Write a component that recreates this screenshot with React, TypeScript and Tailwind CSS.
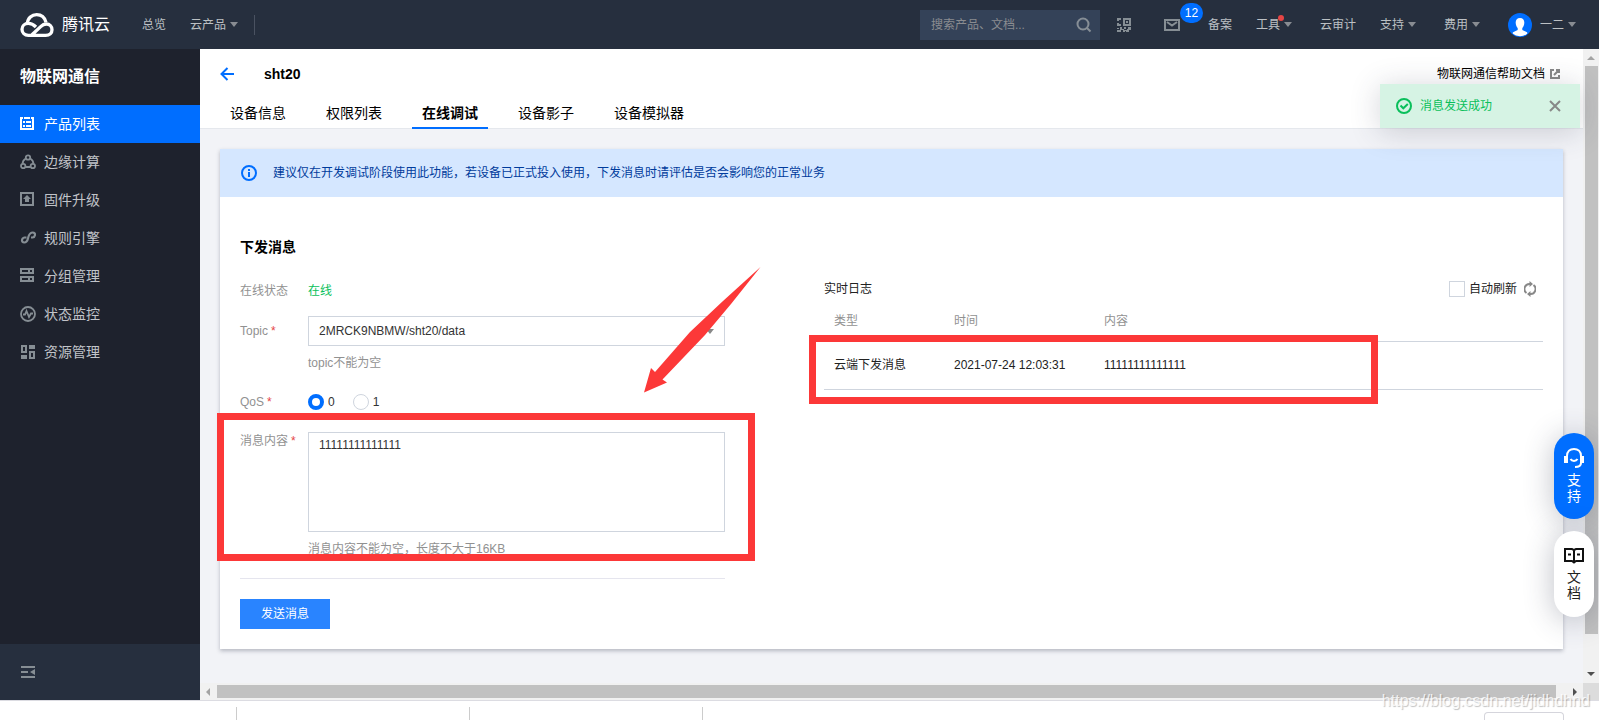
import React from "react";

const navItems = ["产品列表", "边缘计算", "固件升级", "规则引擎", "分组管理", "状态监控", "资源管理"];
const tabs = ["设备信息", "权限列表", "在线调试", "设备影子", "设备模拟器"];

function Caret({ className = "text-[#888c92]" }: { className?: string }) {
  return (
    <svg width="8" height="5" viewBox="0 0 8 5" className={className} aria-hidden="true">
      <path d="M0 0h8L4 5z" fill="currentColor" />
    </svg>
  );
}

function CloudLogo() {
  return (
    <svg width="34" height="24" viewBox="0 0 100 72" fill="none" stroke="#fff" strokeWidth="10" aria-hidden="true">
      <path d="M47 42C39 34 31 31 24 31C13 31 5 39 5 49C5 59 13 67 24 67H76C88 67 95 60 95 50C95 40 88 33 78 33C71 33 66 36 61 41L35 65" />
      <path d="M21 32C22 15 35 5 49 5C62 5 73 13 77 28" />
    </svg>
  );
}

function NavIcon({ index }: { index: number }) {
  const common = { width: 16, height: 16, viewBox: "0 0 16 16", fill: "none", stroke: "currentColor", strokeWidth: 2, "aria-hidden": true } as const;
  switch (index) {
    case 0:
      return (
        <svg {...common}>
          <path d="M1 2v11h12V2M0 2h3M11 2h3M4 2h6" />
          <path d="M0 1h3v2H0zM11 1h3v2h-3z" fill="currentColor" stroke="none" />
          <path d="M3 6h2M6 6h5M3 10h2M6 10h5" />
        </svg>
      );
    case 1:
      return (
        <svg {...common} strokeWidth="1.800">
          <circle cx="8" cy="3.500" r="2.200" />
          <circle cx="3.200" cy="12" r="2.200" />
          <circle cx="12.800" cy="12" r="2.200" />
          <path d="M5.800 4.500C4 5.500 2.600 7.500 2.600 9.800M10.200 4.500C12 5.500 13.400 7.500 13.400 9.800M5.400 13H10.600" />
        </svg>
      );
    case 2:
      return (
        <svg {...common}>
          <path d="M1 1h12v12H1z" />
          <path d="M7 3l4 4H9v3H5V7H3z" fill="currentColor" stroke="none" />
        </svg>
      );
    case 3:
      return (
        <svg {...common} strokeWidth="2.200">
          <path d="M6.500 7.500H4.500C1.500 8 1 12.500 4.200 12.500C8 12.500 7.500 9.500 8.500 6.500C9.500 3.500 10.500 2.500 12.800 2.500C16 2.500 15.500 7 12.500 7.500H11" />
        </svg>
      );
    case 4:
      return (
        <svg {...common}>
          <path d="M1 1h12v4H1zM1 9h12v4H1zM9 1v4M9 9v4" />
        </svg>
      );
    case 5:
      return (
        <svg {...common}>
          <circle cx="8" cy="8" r="7" strokeWidth="1.800" />
          <path d="M3 8.500h2L6.500 5L9 11l2-3.500h2" strokeWidth="1.800" />
        </svg>
      );
    default:
      return (
        <svg {...common}>
          <path d="M2 2h4v6H2zM10 8h4v6h-4z" />
          <path d="M9 1h6v4H9zM1 11h6v4H1z" fill="currentColor" stroke="none" />
        </svg>
      );
  }
}

function TopBar() {
  return (
    <header className="flex h-[49px] shrink-0 items-center bg-[#262f3e] pr-[23px] pl-5 text-xs text-[#bcc0c4]">
      <a href="#home" className="flex items-center gap-2 text-base text-white">
        <CloudLogo />
        腾讯云
      </a>
      <a href="#overview" className="ml-8">总览</a>
      <button type="button" className="ml-6 flex items-center gap-1">云产品 <Caret /></button>
      <span className="ml-4 h-5 w-px bg-[#4a5261]" />
      <div className="ml-auto flex items-center">
        <label className="flex h-[30px] w-[180px] items-center bg-[#344258] pr-2 pl-[11px]">
          <span className="sr-only">搜索</span>
          <input placeholder="搜索产品、文档..." className="h-[30px] min-w-0 flex-1 bg-transparent outline-none placeholder:text-[#8a8c90]" />
          <svg width="16" height="16" viewBox="0 0 16 16" fill="none" stroke="#868e96" strokeWidth="2" aria-hidden="true">
            <circle cx="7" cy="7" r="5.500" />
            <path d="M11 11l3.500 3.500" />
          </svg>
        </label>
        <button type="button" aria-label="二维码" className="ml-[17px] text-[#868e94]">
          <svg width="14" height="14" viewBox="0 0 14 14" fill="currentColor" aria-hidden="true">
            <path d="M0 0h4v2H2v1H0zM0 5h2v1h2v2H0zM6 0h8v8H6zM8 2v4h4V2zM9 3h2v2H9zM0 10h2v1H0zM3 9h2v2h2V9h2v2H7v1H4v2H0v-2h3zM11 9h3v3h-2v-1h-1zM6 12h4v-1h2v3H9v-1H8v1H6z" fillRule="evenodd" />
          </svg>
        </button>
        <button type="button" aria-label="站内信" className="relative ml-[33px] text-[#868e94]">
          <svg width="16" height="12" viewBox="0 0 16 12" fill="none" stroke="currentColor" strokeWidth="2" aria-hidden="true">
            <path d="M1 1h14v10H1zM3 3l5 3.500L13 3" />
          </svg>
          <span className="absolute -top-4 left-4 flex h-5 w-[23px] items-center justify-center rounded-full bg-[#006eff] text-xs text-white">12</span>
        </button>
        <a href="#beian" className="ml-7">备案</a>
        <button type="button" className="relative ml-6 flex items-center gap-1">
          工具 <Caret />
          <span className="absolute -top-[2px] left-[22px] size-[6px] rounded-full bg-[#e54545]" />
        </button>
        <a href="#audit" className="ml-7">云审计</a>
        <button type="button" className="ml-6 flex items-center gap-1">支持 <Caret /></button>
        <button type="button" className="ml-7 flex items-center gap-1">费用 <Caret /></button>
        <button type="button" className="ml-7 flex items-center gap-1">
          <svg width="24" height="24" viewBox="0 0 24 24" className="mr-1" aria-hidden="true">
            <circle cx="12" cy="12" r="12" fill="#006eff" />
            <path d="M12 5c3 0 4.500 2 4.300 5c-.2 2.500-1 4-2 5v2l5.200 2.500A12 12 0 0 1 4.500 19.500L9.700 17v-2c-1-1-1.800-2.500-2-5C7.500 7 9 5 12 5z" fill="#fff" />
            <path d="M4.500 20.500Q12 15 19.500 20.500A12 12 0 0 1 4.500 20.500z" fill="#fff" />
          </svg>
          一二 <Caret />
        </button>
      </div>
    </header>
  );
}

function SideBar() {
  return (
    <aside className="flex w-[200px] shrink-0 flex-col bg-[#1e222d]">
      <h1 className="flex h-[56px] items-center pl-5 text-base font-bold text-white">物联网通信</h1>
      <nav className="flex flex-1 flex-col text-sm">
        {navItems.map((name, i) => (
          <a
            key={name}
            href={`#nav-${i}`}
            className={i === 0 ? "flex h-[38px] items-center gap-2 bg-[#006eff] pl-5 text-white" : "flex h-[38px] items-center gap-2 pl-5 text-[#c1c4c9]"}
          >
            <span className={i === 0 ? "text-white" : "text-[#868e94]"}><NavIcon index={i} /></span>
            {name}
          </a>
        ))}
      </nav>
      <button type="button" aria-label="收起" className="flex h-14 items-center bg-[#262f3e] pl-[21px]">
        <svg width="14" height="12" viewBox="0 0 14 12" fill="#868e94" aria-hidden="true">
          <path d="M0 0h14v2H0zM0 5h7v2H0zM0 10h14v2H0zM9 6l5-3v6z" />
        </svg>
      </button>
    </aside>
  );
}

function PageHeader() {
  return (
    <div className="border-b border-[#e5e8ed] bg-white px-5">
      <div className="flex h-[50px] items-center">
        <a href="#back" aria-label="返回" className="text-[#006eff]">
          <svg width="14" height="14" viewBox="0 0 14 14" fill="none" stroke="currentColor" strokeWidth="2" aria-hidden="true">
            <path d="M14 7H2M7.500 1l-6 6l6 6" />
          </svg>
        </a>
        <h2 className="ml-[30px] text-sm font-bold text-black">sht20</h2>
        <a href="#help" className="ml-auto flex items-center gap-[5px] pr-[3px] text-xs text-black">
          物联网通信帮助文档
          <svg width="10" height="10" viewBox="0 0 10 10" fill="none" stroke="#888" strokeWidth="2" aria-hidden="true">
            <path d="M4 1H1v8h8V6M6 1h3v3M9 1L4 6" />
          </svg>
        </a>
      </div>
      <div role="tablist" className="-mb-px flex gap-5 text-sm">
        {tabs.map((t, i) => (
          <button
            key={t}
            type="button"
            role="tab"
            aria-selected={i === 2}
            className={i === 2 ? "h-[30px] border-b-2 border-[#006eff] px-[10px] font-bold text-black" : "h-[30px] border-b-2 border-transparent px-[10px] text-black"}
          >
            {t}
          </button>
        ))}
      </div>
    </div>
  );
}

function Required() {
  return <span className="ml-[3px] text-[#e54545]">*</span>;
}

function MessageForm() {
  return (
    <form className="text-[#919191]" onSubmit={(e) => e.preventDefault()}>
      <div className="flex flex-col gap-[10px]">
        <div className="flex h-[30px] items-center">
          <span className="w-[68px]">在线状态</span>
          <span className="text-[#0abf5b]">在线</span>
        </div>
        <div className="flex">
          <label htmlFor="topic" className="w-[68px] shrink-0 leading-[30px]">Topic<Required /></label>
          <div className="flex-1">
            <div className="relative">
              <select id="topic" className="block h-[30px] w-full appearance-none border border-[#cfd5de] bg-white px-[10px] text-xs text-[#333] outline-none">
                <option>2MRCK9NBMW/sht20/data</option>
              </select>
              <span className="pointer-events-none absolute top-[13px] right-[11px] leading-none"><Caret className="block text-[#888]" /></span>
            </div>
            <p className="mt-2">topic不能为空</p>
          </div>
        </div>
        <div role="radiogroup" aria-labelledby="qos-label" className="flex h-10 items-center">
          <span id="qos-label" className="w-[68px]">QoS<Required /></span>
          <label className="flex items-center gap-1 text-[#333]">
            <input type="radio" name="qos" defaultChecked className="size-4 appearance-none rounded-full border border-[#cfd5de] bg-white checked:border-4 checked:border-[#006eff]" />
            0
          </label>
          <label className="ml-[18px] flex items-center gap-1 text-[#333]">
            <input type="radio" name="qos" className="size-4 appearance-none rounded-full border border-[#cfd5de] bg-white checked:border-4 checked:border-[#006eff]" />
            1
          </label>
        </div>
        <div className="flex">
          <label htmlFor="content" className="w-[68px] shrink-0">消息内容<Required /></label>
          <div className="flex-1">
            <textarea id="content" defaultValue="11111111111111" className="block h-[100px] w-full resize-none border border-[#cfd5de] px-[10px] py-[3px] text-[#333] outline-none" />
            <p className="mt-2">消息内容不能为空，长度不大于16KB</p>
          </div>
        </div>
      </div>
      <hr className="my-5 border-[#e5e5ee]" />
      <button type="submit" className="block h-[30px] w-[90px] bg-[#2984ff] text-white">发送消息</button>
    </form>
  );
}

function LogPanel() {
  return (
    <section className="text-[#222]">
      <div className="flex h-[26px] items-center">
        <h3>实时日志</h3>
        <label className="ml-auto flex items-center gap-1">
          <input type="checkbox" className="size-4 appearance-none border border-[#cfd5de] bg-white" />
          自动刷新
        </label>
        <button type="button" aria-label="刷新" className="mr-[7px] ml-[7px]">
          <svg width="12" height="16" viewBox="0 0 12 16" fill="none" stroke="#888" strokeWidth="2" aria-hidden="true">
            <path d="M2.500 12A5 5 0 0 1 6 3M9.500 4A5 5 0 0 1 6 13" />
            <path d="M5.500 0l3.500 3l-3.500 3zM6.500 10v6L3 13z" fill="#888" stroke="none" />
          </svg>
        </button>
      </div>
      <table className="w-full table-fixed border-collapse text-left">
        <colgroup>
          <col className="w-[120px]" />
          <col className="w-[150px]" />
          <col />
        </colgroup>
        <thead>
          <tr className="h-[39px] border-b border-[#cfd5de] text-[#919191]">
            <th className="px-[10px] font-normal">类型</th>
            <th className="px-[10px] font-normal">时间</th>
            <th className="px-[10px] font-normal">内容</th>
          </tr>
        </thead>
        <tbody>
          <tr className="h-12 border-b border-[#cfd5de]">
            <td className="px-[10px]">云端下发消息</td>
            <td className="px-[10px] whitespace-nowrap">2021-07-24 12:03:31</td>
            <td className="px-[10px]">11111111111111</td>
          </tr>
        </tbody>
      </table>
    </section>
  );
}

function Annotations() {
  return (
    <div className="pointer-events-none" aria-hidden="true">
      <div className="absolute top-[264px] -left-[3px] h-[148px] w-[538px] border-[7px] border-[#fc3838]" />
      <div className="absolute top-[186px] left-[589px] h-[69px] w-[569px] border-[7px] border-[#fc3838]" />
      <svg width="117" height="126" viewBox="0 0 117 126" className="absolute top-[118px] left-[424px]">
        <path d="M116.500 0L87 37L61 68L18.500 112.500L23 115.500L0 125.500L7 101L11 105L46 65L79 34Z" fill="#fc3838" />
      </svg>
    </div>
  );
}

function FloatButtons() {
  return (
    <div className="absolute top-[433px] right-[5px] flex flex-col gap-3 text-sm leading-[16px]">
      <button type="button" className="flex h-[86px] w-10 flex-col items-center rounded-full bg-[#006eff] pt-[14px] text-white shadow-[0_3px_30px_rgba(54,58,80,0.32)]">
        <svg width="20" height="22" viewBox="0 0 20 22" fill="none" stroke="#fff" strokeWidth="2" aria-hidden="true">
          <path d="M3 9C3 4.500 6 2 10 2s7 2.500 7 7v7c0 3-2 4-6 4M6.500 12c1.500 2.500 5.500 2.500 7 0" />
          <path d="M0 9h4v7H0zM16 9h4v7h-4z" fill="#fff" stroke="none" />
        </svg>
        <span className="mt-[3px]">支</span>
        <span>持</span>
      </button>
      <button type="button" className="flex h-[86px] w-10 flex-col items-center rounded-full bg-white pt-4 text-[#222] shadow-[0_3px_30px_rgba(54,58,80,0.32)]">
        <svg width="20" height="17" viewBox="0 0 20 17" fill="none" stroke="#111" strokeWidth="2" aria-hidden="true">
          <path d="M10 15V3L8 2H1v12h7l2 1.500L12 14h7V2h-7l-2 1M4 7.500h3M13 7.500h3" />
        </svg>
        <span className="mt-[5px]">文</span>
        <span>档</span>
      </button>
    </div>
  );
}

function Toast() {
  return (
    <div role="status" className="absolute top-[84px] right-[19px] flex h-11 w-[200px] items-center bg-[#d6f3e4] pr-[19px] pl-4 text-xs text-[#0abf5b] shadow-[0_3px_30px_rgba(54,58,80,0.22)]">
      <svg width="16" height="16" viewBox="0 0 16 16" fill="none" stroke="currentColor" strokeWidth="2" aria-hidden="true">
        <circle cx="8" cy="8" r="7" />
        <path d="M4.500 7.500l2.800 2.800L11.800 6" />
      </svg>
      <span className="ml-2">消息发送成功</span>
      <button type="button" aria-label="关闭" className="ml-auto text-[#888]">
        <svg width="12" height="12" viewBox="0 0 12 12" fill="none" stroke="currentColor" strokeWidth="2" aria-hidden="true">
          <path d="M1 1l10 10M11 1L1 11" />
        </svg>
      </button>
    </div>
  );
}

export default function App() {
  return (
    <div className="relative flex min-h-screen flex-col overflow-hidden bg-white font-['Liberation_Sans','Noto_Sans_CJK_SC',sans-serif]">
      <TopBar />
      <div className="flex flex-1">
        <SideBar />
        <div className="flex min-w-0 flex-1 flex-col bg-[#f2f3f7]">
          <div className="flex flex-1">
            <main className="min-w-0 flex-1">
              <PageHeader />
              <div className="px-5 pt-5">
                <div className="relative bg-white text-xs leading-[18px] shadow-[0_2px_4px_rgba(54,58,80,0.32)]">
                  <div className="flex h-12 items-center gap-4 bg-[#d5e7ff] pl-[21px] text-[#003b9c]">
                    <svg width="16" height="16" viewBox="0 0 16 16" fill="none" stroke="#006eff" strokeWidth="2" aria-hidden="true">
                      <circle cx="8" cy="8" r="7" />
                      <path d="M8 7v5M8 4v2" />
                    </svg>
                    建议仅在开发调试阶段使用此功能，若设备已正式投入使用，下发消息时请评估是否会影响您的正常业务
                  </div>
                  <div className="px-5 pt-10 pb-5">
                    <h3 className="mb-[19px] text-sm leading-5 font-bold text-black">下发消息</h3>
                    <div className="grid grid-cols-[485px_1fr] gap-[99px]">
                      <MessageForm />
                      <LogPanel />
                    </div>
                  </div>
                  <Annotations />
                </div>
              </div>
            </main>
            <div className="flex w-4 flex-col items-center bg-[#f1f1f1]" aria-hidden="true">
              <svg width="8" height="17" viewBox="0 0 8 17"><path d="M4 7l4 4H0z" fill="#a3a3a3" /></svg>
              <div className="w-[13px] flex-1 bg-[#c1c1c1]" />
              <svg width="8" height="49" viewBox="0 0 8 49"><path d="M0 38h8l-4 4z" fill="#505050" /></svg>
            </div>
          </div>
          <div className="flex h-[17px] items-center bg-[#f1f1f1]" aria-hidden="true">
            <svg width="17" height="8" viewBox="0 0 17 8"><path d="M6 4l4-4v8z" fill="#a3a3a3" /></svg>
            <div className="h-[13px] flex-1 bg-[#c1c1c1]" />
            <svg width="27" height="8" viewBox="0 0 27 8"><path d="M17 0l4 4l-4 4z" fill="#505050" /></svg>
            <div className="h-full w-4 bg-[#dcdcdc]" />
          </div>
        </div>
      </div>
      <footer className="flex h-5 shrink-0 border-t border-[#dcdce2] pt-[6px] pr-[35px]" aria-hidden="true">
        <div className="w-[237px] border-r border-[#ccc]" />
        <div className="w-[233px] border-r border-[#ccc]" />
        <div className="w-[233px] border-r border-[#ccc]" />
        <div className="mt-[5px] ml-auto w-20 rounded-t-[4px] border border-b-0 border-[#d5d5dc]" />
      </footer>
      <Toast />
      <FloatButtons />
      <div className="pointer-events-none absolute right-[9px] bottom-[9px] text-base leading-5 text-white/80 [text-shadow:1px_1px_1px_rgba(0,0,0,0.25)]">
        https://blog.csdn.net/jidhdhnd
      </div>
    </div>
  );
}
